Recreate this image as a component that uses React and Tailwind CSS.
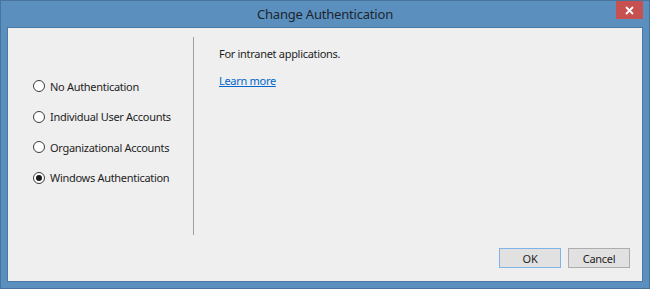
import React, { useState } from 'react';

const options = [
  'No Authentication',
  'Individual User Accounts',
  'Organizational Accounts',
  'Windows Authentication',
];

function Radio({ label, checked, onSelect }) {
  return (
    <label
      onClick={onSelect}
      className="flex items-center h-[30.5px] cursor-default select-none"
    >
      {/* radio circle */}
      <span className="w-[12px] h-[12px] rounded-full border border-[#3c3c3c] bg-white flex items-center justify-center mr-[5px]">
        {checked && <span className="w-[6px] h-[6px] rounded-full bg-[#1a1a1a]" />}
      </span>
      <span className="text-[11px] tracking-[-0.3px] text-[#1e1e1e] leading-none">{label}</span>
    </label>
  );
}

export default function App() {
  const [selected, setSelected] = useState(3);

  return (
    <div
      className="w-[650px] h-[289px] bg-[#5b8fbe] border border-[#47739d] flex flex-col overflow-hidden"
      style={{ fontFamily: '"Noto Sans", "Open Sans", sans-serif' }}
    >
      {/* Title bar */}
      <div className="h-[26px] grid grid-cols-[1fr_auto_1fr] items-center flex-shrink-0">
        <div />
        <div className="text-[13px] tracking-[-0.2px] text-[#1d2630] leading-none pt-[1px]">Change Authentication</div>
        <div className="flex justify-end self-start pr-[6px]">
          <button className="w-[27px] h-[18px] bg-[#c75050] flex items-center justify-center">
            <svg width="9" height="9" viewBox="0 0 9 9">
              <path d="M1 1 L8 8 M8 1 L1 8" stroke="white" strokeWidth="1.8" />
            </svg>
          </button>
        </div>
      </div>

      {/* Client area */}
      <div className="flex-1 mx-[6px] mb-[6px] border border-[#4b79a5] bg-[#efefef] flex flex-col">
        <div className="flex mt-[9px] h-[198px]">
          {/* Left pane with options */}
          <div className="w-[185px] pl-[25px] pt-[34px]">
            {options.map((opt, i) => (
              <Radio key={opt} label={opt} checked={selected === i} onSelect={() => setSelected(i)} />
            ))}
          </div>

          <div className="w-px bg-[#a0a0a0]" />

          {/* Right pane */}
          <div className="flex-1 pl-[25px] pt-[10px]">
            <p className="text-[11px] tracking-[-0.3px] text-[#1e1e1e] leading-[14px]">For intranet applications.</p>
            <a href="#" className="inline-block mt-[13px] text-[11px] tracking-[-0.3px] text-[#0066cc] underline leading-[14px]">
              Learn more
            </a>
          </div>
        </div>

        {/* Buttons */}
        <div className="flex justify-end gap-[7px] mt-[13px] pr-[12px]">
          <button className="w-[62px] h-[20px] bg-[#e1e1e1] border border-[#7eb4ea] text-[11px] tracking-[-0.3px] text-[#1e1e1e] leading-none">
            OK
          </button>
          <button className="w-[62px] h-[20px] bg-[#e1e1e1] border border-[#adadad] text-[11px] tracking-[-0.3px] text-[#1e1e1e] leading-none">
            Cancel
          </button>
        </div>
      </div>
    </div>
  );
}
